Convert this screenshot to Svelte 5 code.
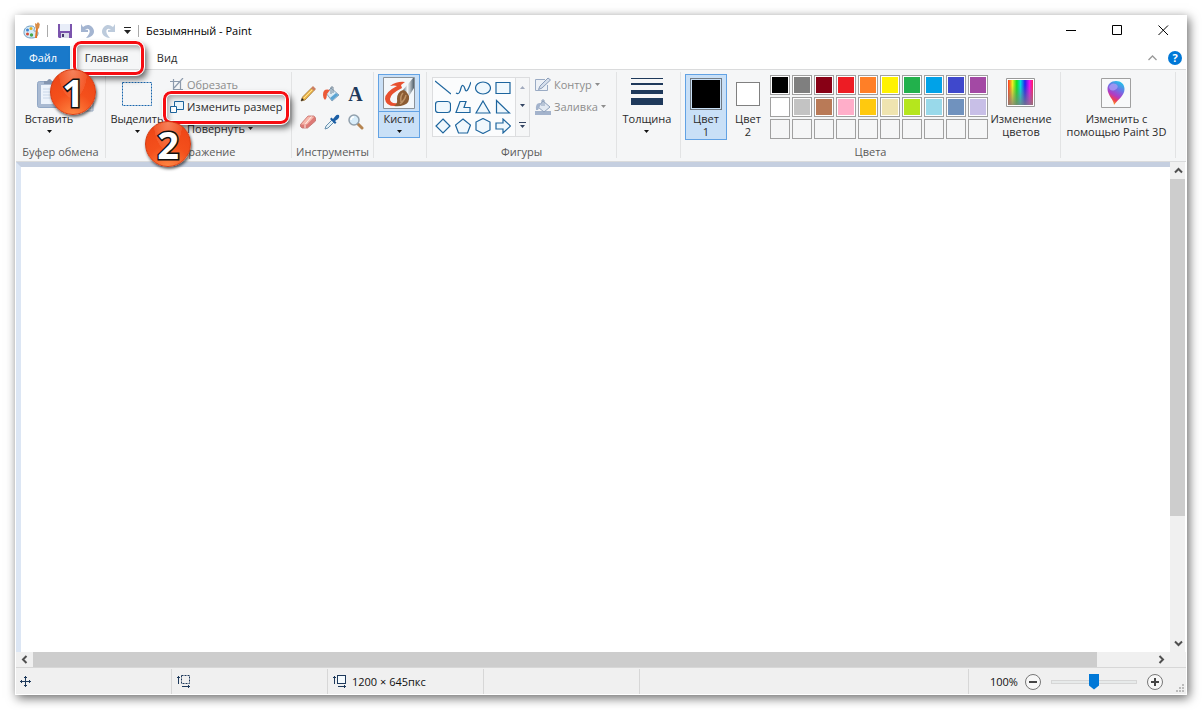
<script lang="ts">
  let zoom = $state(50);
  let activeTab = $state("Главная");

  const shapes = [
    { name: "Линия", d: "M0 1L16 14" },
    { name: "Кривая", d: "M1 13C4 15 5 12 6 8S9 5 10 9S13 11 16 2" },
    { name: "Овал", d: "M8 2C12 2 15.500 4.500 15.500 8S12 14 8 14S.5 11.500 .5 8S4 2 8 2Z" },
    { name: "Прямоугольник", d: "M1 2.500H15V13.500H1Z" },
    { name: "Скругленный прямоугольник", d: "M3.500 2.500H12.500Q15.500 2.500 15.500 5.500V10.500Q15.500 13.500 12.500 13.500H3.500Q.5 13.500 .5 10.500V5.500Q.5 2.500 3.500 2.500Z" },
    { name: "Многоугольник", d: "M1 13.500L5 2.500H11L9 8.500H15V13.500Z" },
    { name: "Треугольник", d: "M8 2L15 14H1Z" },
    { name: "Прямоугольный треугольник", d: "M1.500 1.500L14.500 14H1.500Z" },
    { name: "Ромб", d: "M8 1L15 8L8 15L1 8Z" },
    { name: "Пятиугольник", d: "M8 1L15.500 7L12.500 15H3.500L.5 7Z" },
    { name: "Шестиугольник", d: "M8 .5L15 4V12L8 15.500L1 12V4Z" },
    { name: "Стрелка вправо", d: "M1 5H8V1L15.500 8L8 15V11H1Z" },
  ];

  const palette = [
    "#000000", "#7f7f7f", "#880015", "#ed1c24", "#ff7f27",
    "#fff200", "#22b14c", "#00a2e8", "#3f48cc", "#a349a4",
    "#ffffff", "#c3c3c3", "#b97a57", "#ffaec9", "#ffc90e",
    "#efe4b0", "#b5e61d", "#99d9ea", "#7092be", "#c8bfe7",
    "", "", "", "", "", "", "", "", "", "",
  ];
</script>

{#snippet arrow()}
  <svg class="arrow" width="5" height="3" viewBox="0 0 5 3" aria-hidden="true">
    <path d="M0 0H5L2.500 3Z" fill="currentColor" />
  </svg>
{/snippet}

{#snippet chevron(turn: number)}
  <svg width="9" height="9" viewBox="0 0 9 9" aria-hidden="true">
    <path d="M1 6.500L4.500 3L8 6.500" transform="rotate({turn} 4.500 4.500)" fill="none" stroke="#505050" stroke-width="2" />
  </svg>
{/snippet}

<div class="page">
  <div class="window">
    <header class="titlebar">
      <svg width="18" height="18" viewBox="0 0 18 18" aria-hidden="true">
        <path d="M8 4C3 4 1 7 1 10.500S4 16 8.500 16S15 14 15 11C15 8 10 10 11 8S12 4 8 4Z" fill="#d5eaf8" stroke="#6c9cc0" />
        <circle cx="4.500" cy="8" r="1.500" fill="#3e83d0" />
        <circle cx="8" cy="6.500" r="1.500" fill="#dfb222" />
        <circle cx="4.500" cy="12" r="1.500" fill="#d54d38" />
        <circle cx="8.500" cy="13" r="1.700" fill="#48a84a" />
        <path d="M14 6L13 16" stroke="#e27625" stroke-width="2" />
        <path d="M12.500 6.500L12 1L13.500 2L15 0L16.500 2L17 1L16 6.500Z" fill="#d98b46" />
      </svg>
      <span class="bar"></span>
      <button class="quick" aria-label="Сохранить">
        <svg width="14" height="14" viewBox="0 0 14 14">
          <path d="M0 0H14V14H1L0 13Z" fill="#7b54ad" />
          <path d="M2 0H12V7H2Z" fill="#e8edf8" />
          <path d="M3 9H11V14H3Z" fill="#dadce8" />
          <path d="M4 10H6V13H4Z" fill="#47386d" />
        </svg>
      </button>
      <button class="quick" aria-label="Отменить">
        <svg width="14" height="14" viewBox="0 0 14 14">
          <path d="M1 0L1 8H8V6L5 5.500C10 3 12 8 6 14C14 13 16 7 12 3C9 0 6 1 3 3Z" fill="#a4b5d1" />
        </svg>
      </button>
      <button class="quick" aria-label="Вернуть">
        <svg width="14" height="14" viewBox="0 0 14 14">
          <path d="M13 0L13 8H6V6L9 5.500C4 3 2 8 8 14C0 13 -2 7 2 3C5 0 8 1 11 3Z" fill="#bdcbdc" />
        </svg>
      </button>
      <button class="quick small" aria-label="Настройка панели быстрого доступа">
        <svg width="7" height="7" viewBox="0 0 7 7"><path d="M0 0H7V1H0ZM0 3H7L3.500 7Z" fill="#222" /></svg>
      </button>
      <span class="bar last"></span>
      <h1>Безымянный - Paint</h1>
      <div class="controls">
        <button aria-label="Свернуть"><svg width="11" height="11"><path d="M0 5.500H10" stroke="#000" /></svg></button>
        <button aria-label="Развернуть"><svg width="11" height="11"><path d="M.5 .5H9.500V9.500H.5Z" fill="none" stroke="#000" /></svg></button>
        <button aria-label="Закрыть"><svg width="11" height="11"><path d="M.5 .5L10 10M10 .5L.5 10" stroke="#000" /></svg></button>
      </div>
    </header>

    <nav class="tabs">
      <button class="file">Файл</button>
      <button class="tab" class:active={activeTab === "Главная"} onclick={() => (activeTab = "Главная")}>
        Главная
        <span class="ring tab-ring"></span>
        <span class="badge tab-badge">1</span>
      </button>
      <button class="tab" class:active={activeTab === "Вид"} onclick={() => (activeTab = "Вид")}>Вид</button>
      <div class="tabs-end">
        <button aria-label="Свернуть ленту">
          <svg width="9" height="6" viewBox="0 0 9 6"><path d="M.5 5L4.500 1L8.500 5" fill="none" stroke="#999" stroke-width="1.300" /></svg>
        </button>
        <button class="help" aria-label="Справка">?</button>
      </div>
    </nav>

    <main class="ribbon">
      <section class="group clipboard">
        <div class="content">
          <button class="big">
            <span class="icon">
              <svg width="25" height="32" viewBox="0 0 25 32">
                <rect x=".5" y="3.500" width="24" height="26" rx="2" fill="#a9bad2" stroke="#91a7c5" />
                <path d="M4 7H21V26H4Z" fill="#edf3fb" />
                <path d="M7 6V3H10Q12.500 -1 15 3H18V6Z" fill="#8395b0" />
                <path d="M6 11H19M6 14H19M6 17H19M6 20H19" stroke="#c9d7e9" />
              </svg>
            </span>
            Вставить
            {@render arrow()}
          </button>
          <button class="copy" aria-label="Копировать">
            <svg width="16" height="16" viewBox="0 0 16 16">
              <path d="M1 1H9V11H1ZM7 5H15V15H7Z" fill="#edf3fb" stroke="#9eb1ca" />
              <path d="M9 8H13M9 10H13M9 12H13" stroke="#9eb1ca" />
            </svg>
          </button>
        </div>
        <h2>Буфер обмена</h2>
      </section>

      <section class="group image">
        <div class="content">
          <button class="big">
            <span class="icon">
              <svg width="30" height="24" viewBox="0 0 30 24">
                <rect x=".5" y=".5" width="29" height="23" fill="none" stroke="#1966ad" stroke-dasharray="2 1" />
              </svg>
            </span>
            Выделить
            {@render arrow()}
          </button>
          <div class="rows">
            <button class="row disabled">
              <svg width="14" height="14" viewBox="0 0 14 14">
                <path d="M0 3.500H10.500V13M3.500 1V11.500H13M13 0L4 10" fill="none" stroke="#8d9bad" stroke-width="1.200" />
              </svg>
              Обрезать
            </button>
            <button class="row resize">
              <svg width="14" height="14" viewBox="0 0 14 14">
                <path d="M4.500 1.500H13.500V9.500H4.500Z" fill="#eaf5fb" stroke="#1d659e" />
                <path d="M.5 6.500H6.500V12.500H.5Z" fill="#fff" stroke="#1d659e" />
              </svg>
              Изменить размер
              <span class="ring row-ring"></span>
              <span class="badge row-badge">2</span>
            </button>
            <button class="row">
              <svg width="14" height="14" viewBox="0 0 14 14">
                <path d="M1 12L6 3V12ZM8 12V3L13 12Z" fill="#d5eafa" stroke="#1d659e" />
              </svg>
              Повернуть {@render arrow()}
            </button>
          </div>
        </div>
        <h2>Изображение</h2>
      </section>

      <section class="group tools-group">
        <div class="content tools">
          <button aria-label="Карандаш">
            <svg width="16" height="16" viewBox="0 0 16 16">
              <path d="M1 15L2.500 11L11.500 2L14 4.500L5 14Z" fill="#f0ba4a" stroke="#98713c" stroke-width=".8" />
              <path d="M4 12L12.500 3.500" stroke="#ffe29a" />
              <path d="M11 2L13 0L16 3L14 5Z" fill="#cc8062" /><path d="M1 15L2 12L4 14Z" fill="#222" />
            </svg>
          </button>
          <button aria-label="Заливка цветом">
            <svg width="17" height="16" viewBox="0 0 17 16">
              <path d="M8 2L16 9L9 15L3 7Z" fill="#d9ebf5" stroke="#718fa9" stroke-width=".8" />
              <path d="M9 14.500L15.500 9L13 7L7 12Z" fill="#5ba4d3" />
              <path d="M8 8V1H10V7" fill="none" stroke="#788a9a" />
              <path d="M7 4Q0 2 0 9Q0 12 2 14Q4 12 4 8Z" fill="#ec5a38" />
            </svg>
          </button>
          <button class="text-tool" aria-label="Текст">A</button>
          <button aria-label="Ластик">
            <svg width="16" height="14" viewBox="0 0 16 14">
              <path d="M.5 9.500L8 1H14L15.500 3V6L7.500 13H2L.5 11.500Z" fill="#dd7a76" stroke="#c26e6a" stroke-width=".8" /><path d="M1 9.500L8 1.500H14.500L7 9.500Z" fill="#f7b7ac" />
              <path d="M5 9.500L11.500 1.500M5 10V13" stroke="#fff0e8" />
            </svg>
          </button>
          <button aria-label="Палитра">
            <svg width="16" height="16" viewBox="0 0 16 16">
              <path d="M1 15L2 12L8 6L10 8L4 14Z" fill="#e3f1f8" stroke="#6790ae" />
              <path d="M6 5L7.500 3.500L9 5L11.500 2Q13 0 15 1Q16 3 14 5L11 7L12.500 8.500L11 10Z" fill="#1c5fa5" />
            </svg>
          </button>
          <button aria-label="Масштаб">
            <svg width="16" height="16" viewBox="0 0 16 16">
              <path d="M10 10L14 14" stroke="#b58450" stroke-width="3" stroke-linecap="round" />
              <circle cx="6" cy="6" r="5" fill="#d8edfa" stroke="#91a0ad" stroke-width="1.500" />
              <path d="M3 6Q3 3 6 3" fill="none" stroke="#fff" stroke-width="1.500" />
            </svg>
          </button>
        </div>
        <h2>Инструменты</h2>
      </section>

      <section class="group brushes">
        <button class="big selected brush">
          <span class="icon">
            <svg width="32" height="32" viewBox="0 0 32 32">
              <defs>
                <linearGradient id="ferrule">
                  <stop offset="0" stop-color="#5f6e7a" /><stop offset=".4" stop-color="#f4f8fa" /><stop offset="1" stop-color="#51606c" />
                </linearGradient>
              </defs>
              <path d="M.5 .5H31.500V31.500H.5Z" fill="#f3f7fa" stroke="#8b9299" />
              <path d="M22 5Q14 4 7 9Q11 8 14 9Q2 15 2 22Q3 30 14 29L15 26Q7 27 7 22Q7 17 19 11L18 8Z" fill="#e8502f" />
              <path d="M31 1H30L20 13L26 19L31 11Z" fill="url(#ferrule)" />
              <path d="M20 13Q23 13 26 19Q27 26 21 28Q16 30 11 29Q15 27 14 22Q14 15 20 13Z" fill="#8c5c33" />
              <path d="M20 16Q17 19 18 25M23 18Q22 23 17 27" fill="none" stroke="#bd9164" stroke-width="1.500" />
            </svg>
          </span>
          Кисти
          {@render arrow()}
        </button>
      </section>

      <section class="group shapes-group">
        <div class="content">
          <div class="gallery">
            <div class="shapes">
              {#each shapes as shape}
                <button aria-label={shape.name}>
                  <svg width="16" height="16" viewBox="0 0 16 16"><path d={shape.d} fill={shape.d.endsWith("Z") ? "#f0f8fd" : "none"} stroke="#1d659e" stroke-width="1.200" /></svg>
                </button>
              {/each}
            </div>
            <div class="gallery-scroll">
              <button aria-label="Вверх"><svg width="5" height="3"><path d="M0 3H5L2.500 0Z" fill="#a1aabd" /></svg></button>
              <button aria-label="Вниз">{@render arrow()}</button>
              <button aria-label="Другие фигуры"><svg width="7" height="6"><path d="M0 0H7V1H0ZM1 3H6L3.500 6Z" fill="#344563" /></svg></button>
            </div>
          </div>
          <div class="rows">
            <button class="row disabled">
              <svg width="16" height="16" viewBox="0 0 16 16">
                <path d="M10 2.500H.5V13.500H12.500V8" fill="#edf1f6" stroke="#9aabc4" /><path d="M3.500 12.500L5 9L13 1L15.500 3L7 11Z" fill="#d5deeb" stroke="#8a9db9" />
              </svg>
              Контур {@render arrow()}
            </button>
            <button class="row disabled">
              <svg width="16" height="16" viewBox="0 0 16 16">
                <path d="M0 12H16V16H0Z" fill="#a3b3cc" /><path d="M8 2L15 8L9 13L3 8Z" fill="#e2e9f2" stroke="#8c9fba" /><path d="M7 7V1H9V7" fill="none" stroke="#8c9fba" /><path d="M6 4Q0 3 1 11H3L5 7Z" fill="#a3b3cc" />
              </svg>
              Заливка {@render arrow()}
            </button>
          </div>
        </div>
        <h2>Фигуры</h2>
      </section>

      <section class="group size">
        <button class="big">
          <span class="icon">
            <svg width="32" height="32" viewBox="0 0 32 32"><path d="M0 0H32V1H0ZM0 5H32V7H0ZM0 12H32V16H0ZM0 20H32V27H0Z" fill="#1e395b" /></svg>
          </span>
          Толщина
          {@render arrow()}
        </button>
      </section>

      <section class="group colors">
        <div class="content">
          <button class="big color-button selected">
            <span class="icon"><span class="swatch primary"></span></span>
            Цвет<br />1
          </button>
          <button class="big color-button">
            <span class="icon"><span class="swatch"></span></span>
            Цвет<br />2
          </button>
          <div class="palette">
            {#each palette as color}
              <button class:empty={!color} aria-label={color || "Пусто"} style:background-color={color || null}></button>
            {/each}
          </div>
          <button class="big edit-colors">
            <span class="icon">
              <svg width="30" height="32" viewBox="0 0 30 32">
                <defs>
                  <linearGradient id="hue">
                    <stop offset="0" stop-color="#f32" /><stop offset=".18" stop-color="#ee2" /><stop offset=".35" stop-color="#1d2" />
                    <stop offset=".5" stop-color="#0dd" /><stop offset=".68" stop-color="#22e" /><stop offset=".86" stop-color="#e1e" /><stop offset="1" stop-color="#f25" />
                  </linearGradient>
                  <linearGradient id="gray" x2="0" y2="1">
                    <stop offset=".2" stop-color="#808080" stop-opacity="0" /><stop offset="1" stop-color="#808080" stop-opacity=".8" />
                  </linearGradient>
                </defs>
                <path d="M.5 .5H28.500V28.500H.5Z" fill="#fff" stroke="#999" />
                <path d="M2 2H27V27H2Z" fill="url(#hue)" /><path d="M2 2H27V27H2Z" fill="url(#gray)" />
              </svg>
            </span>
            Изменение<br />цветов
          </button>
        </div>
        <h2>Цвета</h2>
      </section>

      <section class="group paint3d">
        <button class="big">
          <span class="icon">
            <svg width="30" height="32" viewBox="0 0 30 32">
              <defs>
                <linearGradient id="drop" x1=".7" y1="0" x2=".3" y2="1">
                  <stop offset="0" stop-color="#20c5ea" /><stop offset=".35" stop-color="#726ee5" /><stop offset=".6" stop-color="#b13bc4" /><stop offset=".78" stop-color="#ed3e56" /><stop offset="1" stop-color="#ffb21d" />
                </linearGradient>
              </defs>
              <path d="M.5 .5H29.500V29.500H.5Z" fill="#f8f9fa" stroke="#a0a0a0" />
              <path d="M15 3C20 3 23.500 6 23.500 11C23.500 18 17 21 13 27C13 22 6.500 17 6.500 11C6.500 6 10 3 15 3Z" fill="url(#drop)" />
              <path d="M8 9Q10 4 15 6Q19 9 14 12Q9 14 8 9Z" fill="#a99cf5" opacity=".8" />
            </svg>
          </span>
          Изменить с<br />помощью Paint 3D
        </button>
      </section>
    </main>

    <div class="workspace">
      <div class="canvas"></div>
      <div class="scroll vertical">
        <button aria-label="Прокрутить вверх">{@render chevron(0)}</button>
        <div class="track"><div class="thumb"></div></div>
        <button aria-label="Прокрутить вниз">{@render chevron(180)}</button>
      </div>
      <div class="scroll horizontal">
        <button aria-label="Прокрутить влево">{@render chevron(270)}</button>
        <div class="track"><div class="thumb"></div></div>
        <button aria-label="Прокрутить вправо">{@render chevron(90)}</button>
      </div>
    </div>

    <footer class="status">
      <div class="pane">
        <svg width="11" height="11" viewBox="0 0 11 11"><path d="M5.500 0V11M0 5.500H11M4 1.500H7M4 9.500H7M1.500 4V7M9.500 4V7" stroke="#1e395b" /></svg>
      </div>
      <div class="pane">
        <svg width="14" height="13" viewBox="0 0 14 13">
          <path d="M1.500 1V9M0 2.500H3M5 11.500H13M11.500 10V13" stroke="#1e395b" />
          <rect x="4.500" y=".5" width="8" height="8" fill="none" stroke="#1e395b" stroke-dasharray="2 1" />
        </svg>
      </div>
      <div class="pane">
        <svg width="14" height="13" viewBox="0 0 14 13">
          <path d="M1.500 1V9M0 2.500H3M5 11.500H13M11.500 10V13" stroke="#1e395b" />
          <rect x="4.500" y=".5" width="8" height="8" fill="#f5fbfe" stroke="#1e395b" />
        </svg>
        1200 × 645пкс
      </div>
      <div class="pane"></div>
      <div class="pane rest"></div>
      <div class="zoom">
        <label for="zoom">100%</label>
        <button aria-label="Уменьшить" onclick={() => (zoom = Math.max(0, zoom - 10))}>
          <svg width="8" height="8"><path d="M0 4H8" stroke="#444" stroke-width="2" /></svg>
        </button>
        <input id="zoom" type="range" min="0" max="100" bind:value={zoom} />
        <button aria-label="Увеличить" onclick={() => (zoom = Math.min(100, zoom + 10))}>
          <svg width="8" height="8"><path d="M0 4H8M4 0V8" stroke="#444" stroke-width="2" /></svg>
        </button>
        <svg class="grip" width="8" height="8" viewBox="0 0 8 8"><path d="M6 0H8V2H6ZM6 3H8V5H6ZM3 3H5V5H3ZM6 6H8V8H6ZM3 6H5V8H3ZM0 6H2V8H0Z" fill="#bbb" /></svg>
      </div>
    </footer>
  </div>
</div>

<style>
  :global(body) {
    margin: 0;
    background: #fff;
  }

  .page {
    box-sizing: border-box;
    display: flex;
    min-height: 100vh;
    padding: 15px;
    font: 11px/13px "Open Sans", "Noto Sans", sans-serif;
    color: #2b2b2b;
  }

  .page * {
    box-sizing: border-box;
  }

  button {
    display: flex;
    align-items: center;
    justify-content: center;
    padding: 0;
    border: 0;
    background: none;
    font: inherit;
    color: inherit;
    white-space: nowrap;
  }

  svg {
    flex: none;
  }

  h1,
  h2 {
    margin: 0;
    font: inherit;
  }

  .window {
    display: flex;
    flex: 1;
    flex-direction: column;
    min-width: 0;
    border: 1px solid #fff;
    background: #fff;
    box-shadow: 2px 3px 10px rgba(0, 0, 0, 0.6);
  }

  .titlebar {
    display: flex;
    align-items: center;
    height: 30px;
    padding: 0 0 1px 7px;
    color: #000;
  }

  .titlebar h1 {
    padding-left: 7px;
  }

  .bar {
    width: 1px;
    height: 12px;
    margin-left: 6px;
    background: #aaa;
  }

  .bar.last {
    margin-left: 4px;
  }

  .quick {
    width: 22px;
    height: 22px;
  }

  .bar + .quick {
    margin-left: 6px;
  }

  .quick.small {
    width: 14px;
  }

  .controls {
    display: flex;
    margin-left: auto;
  }

  .controls button {
    width: 46px;
    height: 29px;
  }

  .tabs {
    display: flex;
    height: 23px;
  }

  .file {
    width: 54px;
    background: #1979ca;
    color: #fff;
  }

  .tab {
    position: relative;
    width: 48px;
  }

  .tab.active {
    width: 73px;
    background: #f5f6f7;
  }

  .tabs-end {
    display: flex;
    align-items: center;
    gap: 11px;
    margin-left: auto;
    padding-right: 4px;
  }

  .help {
    width: 14px;
    height: 14px;
    border-radius: 50%;
    background: #0078d7;
    color: #fff;
    font-weight: bold;
  }

  .ring {
    position: absolute;
    z-index: 2;
    border: 3px solid #f60d12;
    border-radius: 8px;
    outline: 1px solid #fff;
    box-shadow: 3px 4px 6px rgba(0, 0, 0, 0.6), inset 0 0 0 1px #fff, inset 3px 4px 5px rgba(0, 0, 0, 0.3);
    pointer-events: none;
  }

  .tab-ring {
    inset: -5px -1px -6px 3px;
  }

  .row-ring {
    inset: -5px -6px -6px -7px;
  }

  .badge {
    position: absolute;
    z-index: 3;
    width: 46px;
    height: 46px;
    border: 1px solid #d43a10;
    border-radius: 50%;
    background:
      radial-gradient(ellipse at 50% 0, rgba(255, 190, 160, 0.5) 0, rgba(255, 150, 110, 0.2) 45%, transparent 46%),
      radial-gradient(circle at 50% 105%, #ff8a45 0, #f4501c 45%, #ec4214 100%);
    box-shadow: 1px 2px 3px rgba(0, 0, 0, 0.6);
    color: #fff;
    font: 700 38px/44px "Open Sans", sans-serif;
    text-align: center;
    -webkit-text-stroke: 3px #111;
    paint-order: stroke fill;
    pointer-events: none;
  }

  .tab-badge {
    top: 23px;
    left: -20px;
  }

  .row-badge {
    top: 25px;
    left: -25px;
  }

  .ribbon {
    display: flex;
    height: 93px;
    padding: 2px 0 3px;
    border: solid #dadbdc;
    border-width: 1px 0;
    background: #f5f6f7;
  }

  .group {
    display: flex;
    flex: none;
    flex-direction: column;
    align-items: center;
    justify-content: space-between;
    padding-top: 2px;
    border-right: 1px solid #e2e3e4;
  }

  .group h2 {
    color: #5a5a5a;
  }

  .content {
    display: flex;
    align-self: stretch;
  }

  .clipboard {
    width: 90px;
  }

  .image {
    width: 186px;
  }

  .tools-group {
    width: 82px;
  }

  .brushes {
    align-items: flex-start;
    width: 53px;
    padding-left: 4px;
  }

  .shapes-group {
    width: 190px;
  }

  .size {
    width: 64px;
    padding-right: 3px;
  }

  .colors {
    width: 380px;
  }

  .paint3d {
    width: 115px;
    padding-right: 3px;
  }

  .big {
    flex: none;
    flex-direction: column;
    justify-content: flex-start;
    border: 1px solid transparent;
    min-width: 42px;
  }

  .big .icon {
    display: flex;
    align-items: center;
    justify-content: center;
    height: 37px;
  }

  .big .arrow {
    margin-top: 5px;
    color: #111;
  }

  .clipboard .big {
    width: 66px;
  }

  .copy {
    align-self: center;
    width: 8px;
  }

  .image .big {
    width: 62px;
  }

  .rows {
    display: flex;
    flex-direction: column;
  }

  .row {
    position: relative;
    justify-content: flex-start;
    gap: 3px;
    height: 22px;
    padding-bottom: 1px;
  }

  .image .row {
    margin-left: 2px;
  }

  .row.disabled {
    color: #8d8d8d;
  }

  .tools {
    display: grid;
    grid-template-columns: repeat(3, 24px);
    grid-auto-rows: 28px;
    justify-content: center;
    padding: 6px 2px 0 0;
  }

  .text-tool {
    color: #1e395b;
    font: bold 20px/22px "Liberation Serif", serif;
  }

  .selected {
    border-color: #62a2e4;
    background: #c9e0f7;
  }

  .brush {
    height: 64px;
  }

  .brush .icon {
    align-self: stretch;
    border-bottom: 1px solid #62a2e4;
  }

  .shapes-group .content {
    gap: 5px;
    padding: 0 5px;
  }

  .gallery {
    display: flex;
    height: 60px;
    margin-top: 3px;
    border: 1px solid #dcdddf;
    background: #fbfcfd;
  }

  .shapes {
    display: grid;
    grid-template-columns: repeat(4, 20px);
    padding-right: 2px;
  }

  .gallery-scroll {
    display: grid;
    width: 14px;
    border-left: 1px solid #dcdddf;
    background: #f5f6f7;
    color: #344563;
  }

  .swatch {
    width: 24px;
    height: 24px;
    border: 1px solid #808080;
    background: #fff;
  }

  .swatch.primary {
    width: 32px;
    height: 32px;
    border-color: #707a84;
    background: #000;
    box-shadow: inset 0 0 0 1px #c9e0f7;
  }

  .colors .content {
    padding-left: 4px;
  }

  .color-button {
    height: 66px;
  }

  .palette {
    display: grid;
    grid-template-columns: repeat(10, 20px);
    grid-auto-rows: 20px;
    gap: 2px;
    padding: 1px;
  }

  .palette button {
    border: 1px solid #a0a0a0;
    box-shadow: inset 0 0 0 1px #fff;
  }

  .palette .empty {
    box-shadow: none;
  }

  .edit-colors {
    width: 64px;
  }

  .workspace {
    display: grid;
    flex: 1;
    grid-template-rows: 1fr 15px;
    grid-template-columns: 1fr 16px;
    background: #f0f0f0;
  }

  .canvas {
    border-top: 5px solid #c5cfe0;
    border-left: 5px solid #dce6f4;
    background: #fff;
  }

  .scroll {
    display: flex;
    background: #f0f0f0;
  }

  .scroll button {
    flex: none;
    width: 16px;
    height: 17px;
  }

  .track {
    flex: 1;
  }

  .thumb {
    background: #cdcdcd;
  }

  .vertical {
    flex-direction: column;
    border-right: 1px solid #fff;
  }

  .vertical .thumb {
    height: 74%;
  }

  .horizontal button {
    width: 17px;
    height: 15px;
  }

  .horizontal .thumb {
    width: 95%;
    height: 15px;
  }

  .status {
    display: flex;
    height: 27px;
    padding-top: 1px;
    border-top: 1px solid #d7d7d7;
    background: #f0f0f0;
    color: #111;
  }

  .pane {
    display: flex;
    align-items: center;
    gap: 5px;
    width: 156px;
    padding-left: 5px;
    border-right: 1px solid #d7d7d7;
  }

  .pane:first-child {
    padding-left: 4px;
  }

  .pane.rest {
    flex: 1;
  }

  .zoom {
    display: flex;
    align-items: center;
    width: 217px;
    padding: 0 2px 0 21px;
  }

  .zoom button {
    width: 16px;
    height: 16px;
    border: 1px solid #777;
    border-radius: 50%;
    background: #f7f7f7;
  }

  .zoom label {
    margin-right: auto;
  }

  .zoom input {
    appearance: none;
    width: 86px;
    height: 16px;
    margin: 0 10px;
    background: none;
  }

  .zoom input::-webkit-slider-runnable-track {
    height: 4px;
    border: 1px solid #d6d6d6;
    background: #e7eaea;
  }

  .zoom input::-webkit-slider-thumb {
    appearance: none;
    width: 10px;
    height: 16px;
    margin-top: -7px;
    background: #0078d7;
    clip-path: polygon(0 0, 100% 0, 100% 75%, 50% 100%, 0 75%);
  }

  .grip {
    align-self: flex-end;
    margin: 0 0 2px 13px;
  }
</style>
